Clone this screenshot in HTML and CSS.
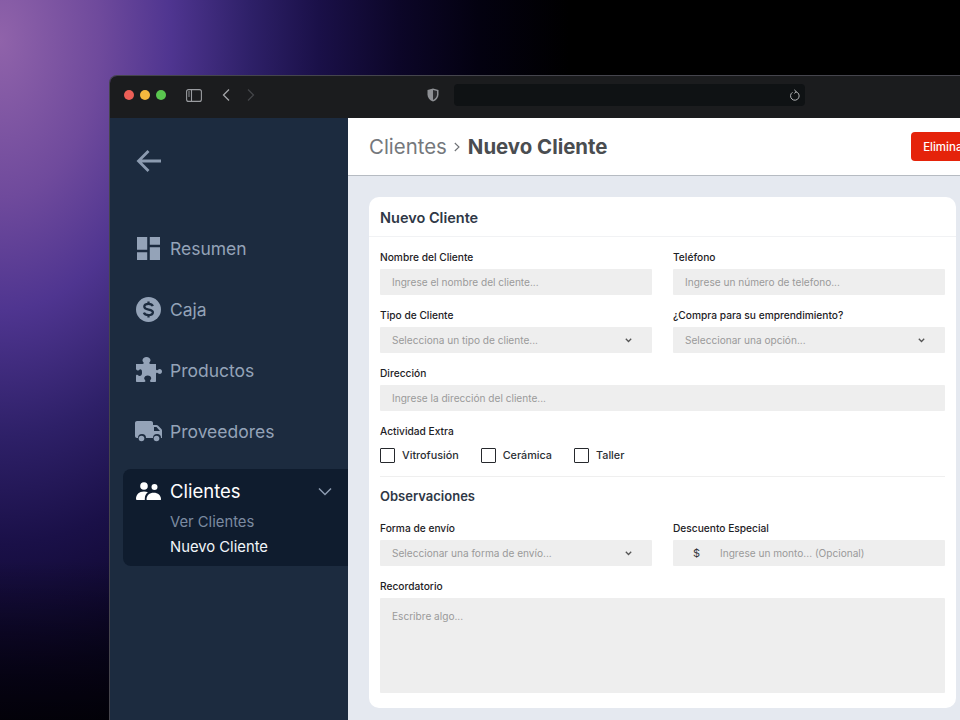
FILE: index.html
```html
<!DOCTYPE html>
<html lang="es">
<head>
<meta charset="utf-8">
<title>Nuevo Cliente</title>
<link rel="stylesheet" href="styles.css">
</head>
<body>
<div class="window">
  <div class="titlebar">
    <span class="dot dot-red"></span><span class="dot dot-yellow"></span><span class="dot dot-green"></span>
    <svg class="tb-sidebar" width="16" height="13" viewBox="0 0 16 13" fill="none" stroke="#9a9ca0" stroke-width="1.1"><rect x=".6" y=".6" width="14.8" height="11.8" rx="2"/><path d="M5.5.6v11.8"/><path d="M2 3h2M2 5h2M2 7h2" stroke-width=".9"/></svg>
    <svg class="tb-back" width="8" height="14" viewBox="0 0 8 14" fill="none" stroke="#a4a6a9" stroke-width="1.3"><path d="M7 1.500 1.500 7 7 12.500"/></svg>
    <svg class="tb-forward" width="8" height="14" viewBox="0 0 8 14" fill="none" stroke="#434548" stroke-width="1.3"><path d="M1 1.500 6.500 7 1 12.500"/></svg>
    <svg class="tb-shield" width="12" height="14" viewBox="0 0 12 14"><path d="M6 .5 11.5 2v4.5c0 3.4-2.2 5.800-5.500 7C2.700 12.300.5 9.900.5 6.500V2z" fill="#8e9094"/><path d="M6 2v10c2.200-1 4-3 4-5.500V3z" fill="#2c2d30"/></svg>
    <div class="address">
      <svg width="11" height="13" viewBox="0 0 11 13" fill="none" stroke="#b4b6b8" stroke-width="1"><path d="M3.500 3.300a4.300 4.300 0 1 0 3.200-.6"/><path d="M5.300 .8 7.300 2.700 5.300 4.400"/></svg>
    </div>
  </div>
  <div class="app">
    <aside class="sidebar">
      <svg class="back" width="26" height="24" viewBox="0 0 26 24" fill="none" stroke="#8c9bb0" stroke-width="2.800"><path d="M12.500 2 2.500 12l10 10M2.500 12H25"/></svg>
      <nav class="nav">
        <a class="nav-item">
          <span class="nav-icon"><svg width="23" height="23" viewBox="3 3 18 18" fill="#94a3b8"><path d="M3 13h8V3H3v10zm0 8h8v-6H3v6zm10 0h8V11h-8v10zm0-18v6h8V3h-8z"/></svg></span>
          <span>Resumen</span>
        </a>
        <a class="nav-item">
          <span class="nav-icon"><svg width="25" height="25" viewBox="0 0 25 25"><circle cx="12.500" cy="12.500" r="12.500" fill="#94a3b8"/><path d="M16.800 9.200c-.5-1.500-2.300-2.300-4.300-2.300-2.400 0-4.200 1.100-4.200 2.900 0 4 8.600 1.600 8.600 5.500 0 1.800-1.900 2.900-4.400 2.900-2.200 0-4-.9-4.600-2.500M12.500 4.500v2.400M12.500 18v2.500" fill="none" stroke="#1c2b3f" stroke-width="2.300"/></svg></span>
          <span>Caja</span>
        </a>
        <a class="nav-item">
          <span class="nav-icon"><svg width="27" height="26" viewBox="0 0 27 26" fill="#94a3b8"><path d="M1 7h6.500c1.200 0 1.500-.9.900-1.700C7.600 4.300 7.500 3.700 7.500 3.200 7.500 1.300 9.300 0 11.500 0s4 1.300 4 3.200c0 .5-.2 1.100-.9 2.100-.6.800-.3 1.700.9 1.700H21v5c0 1.200.9 1.500 1.700.9 1-.8 1.500-.9 2-.9 1.400 0 2.300 1 2.300 2.500S26.100 17 24.700 17c-.5 0-1-.1-2-.9-.8-.6-1.700-.3-1.700.9v7c0 .6-.4 1-1 1h-3.800c-1.200 0-1.500-.9-.9-1.700.7-1 .9-1.500.9-2 0-1.700-1.500-2.800-3.500-2.800s-3.500 1.100-3.500 2.800c0 .5.200 1 .9 2 .6.800.3 1.700-.9 1.700H2c-.6 0-1-.4-1-1v-5c0-1.200.9-1.500 1.700-.9.800.6 1.300.9 1.800.9 1.500 0 2.500-1.200 2.500-2.800S7 12.300 5.500 12.300c-.5 0-1 .3-1.800.9C2.900 13.800 2 13.500 1 12.300z"/></svg></span>
          <span>Productos</span>
        </a>
        <a class="nav-item">
          <span class="nav-icon"><svg width="27" height="21" viewBox="0 0 27 21" fill="#94a3b8"><path d="M2 0h14c1.100 0 2 .9 2 2v2h3.500c.5 0 1 .2 1.400.6l3.500 3.500c.4.4.6.9.6 1.400V15c.6 0 1 .4 1 1s-.4 1-1 1h-1a4 4 0 0 0-8 0h-7a4 4 0 0 0-8 0H2c-1.100 0-2-.9-2-2V2C0 .9.900 0 2 0z"/><path d="M19 6v4h6L21.500 6z" fill="#1c2b3f"/><circle cx="6.500" cy="17.500" r="2.800"/><circle cx="21.500" cy="17.500" r="2.800"/></svg></span>
          <span>Proveedores</span>
        </a>
      </nav>
      <div class="group">
        <a class="nav-item nav-item-active">
          <span class="nav-icon"><svg width="25" height="18" viewBox="0 0 25 18" fill="#fff"><circle cx="8" cy="4" r="3.800"/><circle cx="18.500" cy="5" r="3"/><path d="M0 17c0-4.500 3-7.500 8-7.500 1.500 0 2.800.3 3.900.8C9.800 11.800 8.800 14 8.800 17v1H1a1 1 0 0 1-1-1z"/><path d="M10.500 17.500c0-4 3-6.700 7.200-6.700 4.300 0 7.300 2.700 7.300 6.700 0 .3-.2.500-.5.500H11c-.3 0-.5-.2-.5-.5z"/></svg></span>
          <span class="grow">Clientes</span>
          <svg class="group-chevron" width="14" height="9" viewBox="0 0 14 9" fill="none" stroke="#8c9bb0" stroke-width="1.500"><path d="M1 1.500l6 6 6-6"/></svg>
        </a>
        <a class="sub">Ver Clientes</a>
        <a class="sub sub-active">Nuevo Cliente</a>
      </div>
    </aside>
    <main class="main">
      <header class="header">
        <div class="crumbs">
          <span class="crumb">Clientes</span>
          <svg width="6" height="12" viewBox="0 0 6 12" fill="none" stroke="#6f7276" stroke-width="1.100"><path d="M.8 2l4.200 4-4.200 4"/></svg>
          <strong class="crumb-current">Nuevo Cliente</strong>
        </div>
        <button class="danger" type="button">Eliminar</button>
      </header>
      <div class="content">
        <section class="card">
          <h2 class="card-title">Nuevo Cliente</h2>
          <div class="card-body">
            <div class="grid">
              <div class="field">
                <label class="label">Nombre del Cliente</label>
                <input class="control" placeholder="Ingrese el nombre del cliente...">
              </div>
              <div class="field">
                <label class="label">Teléfono</label>
                <input class="control" placeholder="Ingrese un número de telefono...">
              </div>
              <div class="field">
                <label class="label">Tipo de Cliente</label>
                <div class="control select"><span>Selecciona un tipo de cliente...</span><svg width="7" height="5" viewBox="0 0 7 5" fill="none" stroke="#555" stroke-width="1.300"><path d="M.8.8l2.700 2.700L6.200.8"/></svg></div>
              </div>
              <div class="field">
                <label class="label">¿Compra para su emprendimiento?</label>
                <div class="control select"><span>Seleccionar una opción...</span><svg width="7" height="5" viewBox="0 0 7 5" fill="none" stroke="#555" stroke-width="1.300"><path d="M.8.8l2.700 2.700L6.200.8"/></svg></div>
              </div>
              <div class="field span-2">
                <label class="label">Dirección</label>
                <input class="control" placeholder="Ingrese la dirección del cliente...">
              </div>
              <div class="field span-2">
                <label class="label">Actividad Extra</label>
                <div class="checks">
                  <label class="check"><input type="checkbox">Vitrofusión</label>
                  <label class="check"><input type="checkbox">Cerámica</label>
                  <label class="check"><input type="checkbox">Taller</label>
                </div>
              </div>
            </div>
            <hr class="divider">
            <h3 class="section-title">Observaciones</h3>
            <div class="grid">
              <div class="field">
                <label class="label">Forma de envío</label>
                <div class="control select"><span>Seleccionar una forma de envío...</span><svg width="7" height="5" viewBox="0 0 7 5" fill="none" stroke="#555" stroke-width="1.300"><path d="M.8.8l2.700 2.700L6.200.8"/></svg></div>
              </div>
              <div class="field">
                <label class="label">Descuento Especial</label>
                <div class="control money"><span class="money-sign">$</span><input class="money-input" placeholder="Ingrese un monto... (Opcional)"></div>
              </div>
              <div class="field span-2">
                <label class="label">Recordatorio</label>
                <textarea class="control textarea" placeholder="Escribre algo..."></textarea>
              </div>
            </div>
          </div>
        </section>
      </div>
    </main>
  </div>
</div>
</body>
</html>
```

FILE: styles.css
```css
* { box-sizing: border-box; }
html, body { margin: 0; height: 720px; overflow: hidden; }
body {
  padding: 76px 0 0 110px;
  font-family: Inter, "Liberation Sans", sans-serif;
  background:
    linear-gradient(to bottom, rgba(0,0,0,0) 560px, rgba(0,0,0,.7) 720px),
    radial-gradient(ellipse 570px 900px at 0 40px, #9063aa 0%, #6f4a9c 17.500%, #4f3590 30%, #2e2068 44%, #1a1048 56%, #0c0628 70%, #030110 84%, #000 100%),
    #000;
}
.window {
  width: 890px;
  height: 660px;
  border-radius: 7px 7px 0 0;
  box-shadow: 0 0 0 1px #45454d;
  overflow: hidden;
  display: flex;
  flex-direction: column;
}
.titlebar {
  height: 42px;
  flex: none;
  background: #1b1c1e;
  display: flex;
  align-items: center;
  padding: 0 0 4px 14px;
  gap: 6px;
}
.dot { width: 10px; height: 10px; border-radius: 50%; }
.dot-red { background: #ec5f57; }
.dot-yellow { background: #f4b73e; }
.dot-green { background: #5ac64f; }
.tb-sidebar { margin-left: 14px; }
.tb-back { margin-left: 14px; }
.tb-forward { margin-left: 11px; }
.tb-shield { margin-left: 166px; }
.address {
  width: 351px;
  height: 22px;
  margin-left: 9px;
  border-radius: 4px;
  background: #0f1214;
  display: flex;
  align-items: center;
  justify-content: flex-end;
  padding-right: 5px;
}
.app { flex: 1; display: flex; min-height: 0; }
.sidebar {
  width: 238px;
  flex: none;
  background: #1c2b3f;
  padding: 31px 0 0 13px;
}
.back { display: block; margin-left: 13px; }
.nav { display: flex; flex-direction: column; margin-top: 63px; gap: 37px; }
.nav-item {
  display: flex;
  align-items: center;
  height: 24px;
  gap: 8px;
  font-size: 17.500px;
  color: #94a3b8;
}
.nav-icon { width: 27px; margin-left: 12px; display: flex; justify-content: center; align-items: center; flex: none; }
.nav-icon svg { flex: none; }
.grow { flex: 1; }
.group {
  margin-top: 26px;
  height: 97px;
  background: #0f1c2e;
  border-radius: 8px 0 0 8px;
  padding-top: 10px;
  display: flex;
  flex-direction: column;
}
.nav-item-active { color: #fff; margin-bottom: 7px; padding-right: 16px; font-size: 18.500px; }
.sub { font-size: 14.800px; line-height: 25px; padding-left: 47px; color: #7b8aa0; }
.sub-active { color: #f1f5f9; }
.main { flex: 1; min-width: 0; background: #e5e9f0; display: flex; flex-direction: column; }
.header {
  height: 58px;
  flex: none;
  background: #fff;
  border-bottom: 1px solid #b6bbc2;
  display: flex;
  align-items: center;
  justify-content: space-between;
  padding: 0 21px;
}
.crumbs { display: flex; align-items: center; gap: 7px; font-size: 20.400px; }
.crumb { color: #75787c; }
.crumb-current { color: #4a4d50; font-weight: 700; margin-left: 1px; }
.danger {
  width: 68px;
  height: 29px;
  border: 0;
  border-radius: 4px;
  background: #e5230a;
  color: #fff;
  font: 500 11.500px Inter, "Liberation Sans", sans-serif;
  padding: 0;
}
.content { padding: 21px 44px 0 21px; }
.card { background: #fff; border-radius: 10px; height: 511px; }
.card-title {
  margin: 0;
  height: 40px;
  line-height: 41px;
  padding-left: 11px;
  font-size: 14.500px;
  font-weight: 600;
  color: #2f3846;
  border-bottom: 1px solid #f1f2f4;
}
.card-body { padding: 14px 11px 0; }
.grid { display: grid; grid-template-columns: 272px 272px; column-gap: 21px; row-gap: 14px; }
.field { display: flex; flex-direction: column; min-width: 0; }
.span-2 { grid-column: 1 / 3; }
.label { display: block; font-size: 10.200px; line-height: 12px; font-weight: 500; color: #1d2125; margin-bottom: 6px; }
.control {
  width: 100%;
  height: 26px;
  border: 0;
  border-radius: 1px;
  outline: 0;
  background: #eeeeee;
  padding: 0 12px;
  font: 400 10.100px Inter, "Liberation Sans", sans-serif;
  color: #9a9a9a;
}
.control::placeholder { color: #9a9a9a; opacity: 1; }
.select { display: flex; align-items: center; justify-content: space-between; padding-right: 20px; }
.money { display: flex; align-items: center; padding: 0; }
.money-sign { width: 47px; text-align: center; color: #33373b; font-size: 11px; flex: none; }
.money-input { flex: 1; min-width: 0; border: 0; outline: 0; background: transparent; padding: 0; font: inherit; }
.money-input::placeholder { color: #9a9a9a; opacity: 1; }
.textarea { height: 95px; display: block; padding: 12px; resize: none; }
.checks { display: flex; gap: 22px; margin-top: 4px; height: 16px; align-items: center; }
.check { display: flex; align-items: center; gap: 7px; font-size: 10.800px; font-weight: 500; color: #2a2e33; }
.check input {
  appearance: none;
  width: 15px;
  height: 15px;
  margin: 0;
  border: 1px solid #26292d;
  border-radius: 1px;
  background: #fff;
}
.divider { border: 0; border-top: 1px solid #efefef; margin: 13px 0 0; }
.section-title { margin: 0; height: 45px; padding-top: 11px; font-size: 13px; line-height: 16px; font-weight: 600; color: #2f3846; }
```
